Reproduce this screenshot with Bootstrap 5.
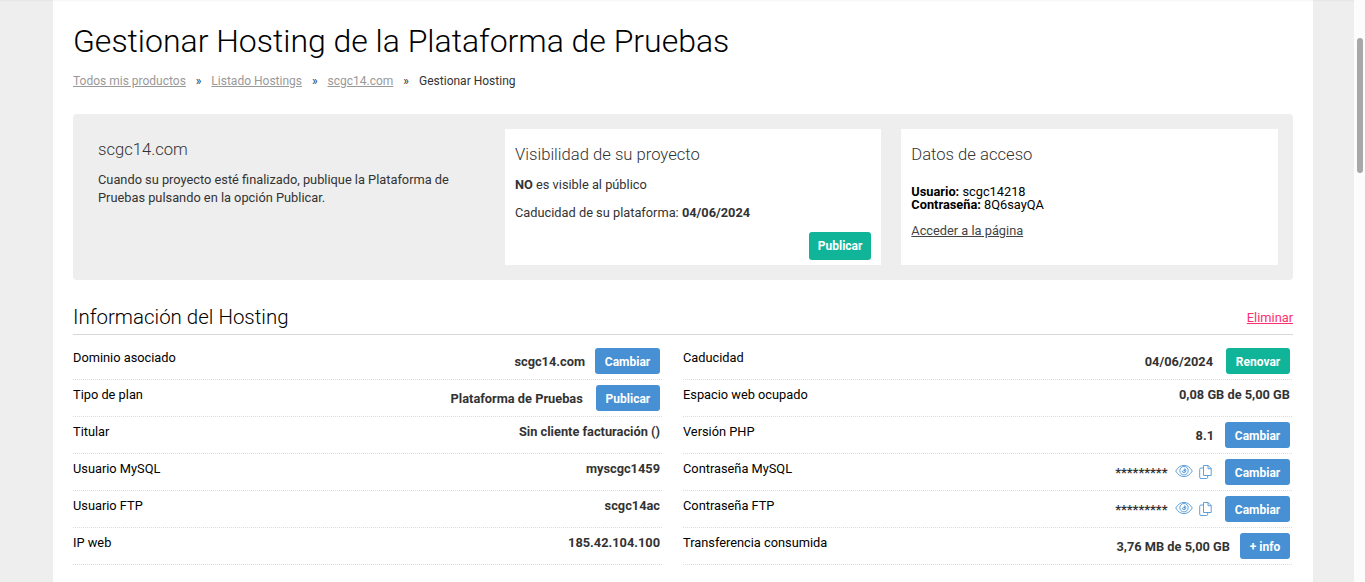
<!DOCTYPE html>
<html lang="es">
<head>
<meta charset="utf-8">
<meta name="viewport" content="width=device-width, initial-scale=1">
<title>Gestionar Hosting</title>
<link rel="stylesheet" href="https://cdn.jsdelivr.net/npm/bootstrap@5.3.0/dist/css/bootstrap.min.css">
<style>
  body { font-family: Roboto, "Liberation Sans", sans-serif; font-size: 12.8px; line-height: 18px; color: #333; background: #fcfcfc; }
  .viewport { width: 1365px; height: 582px; }
  .page-bg { width: 1354px; background: #eee; padding: 0 41px 0 53px; box-shadow: inset 0 3px 3px -3px rgba(0,0,0,.08); }
  .sheet { background: #fff; padding: 0 20px; box-shadow: inset 0 3px 3px -3px rgba(0,0,0,.08); }
  .scroll-track { width: 11px; background: #fcfcfc; padding: 38px 2px 0 3px; }
  .scroll-thumb { height: 135px; background: #a8a8a8; border-radius: 3px; }
  .page-title { font-size: 32px; line-height: 40px; font-weight: 300; color: #000; padding-top: 21px; letter-spacing: -.02px; }
  .crumbs { font-size: 12px; line-height: 18px; margin-top: 11px; }
  .crumbs a { color: #999; }
  .crumbs .sep { width: 25.5px; text-align: center; color: #1a3c66; }
  .crumbs .sep-last { width: 25.8px; color: #333; }
  .summary { margin-top: 24px; height: 166px; padding: 15px; background: #eee; border-radius: 4px; }
  .summary h2 { font-size: 16.64px; line-height: 20px; font-weight: 300; color: #333; margin: 0; padding-top: 1px; }
  .summary h2 + p { margin-top: 11px; }
  .intro { width: 417px; padding: 10px 30px 0 10px; }
  .panel { width: 376px; background: #fff; padding: 15px 10px 5px; }
  .panel-access { width: 377px; margin-left: 20px; padding-left: 10.3px; }
  .expiry { margin-top: 10px; }
  .summary h2 + .access { color: #000; line-height: 13px; margin-top: 20px; }
  .access-link { color: #444; margin-top: 11px; }
  .section-head { height: 55px; border-bottom: 1px solid #d6d8d9; }
  .section-head h2 { font-size: 20.48px; line-height: 24px; font-weight: 300; color: #000; margin: 25px 0 0; }
  .section-head a { color: #fa2f6e; margin-top: 29px; }
  .list-left { width: 589px; }
  .list-right { width: 609px; margin-left: 21px; }
  .item { height: 37px; border-bottom: 1px dotted #dadcdd; padding: 5px 2px 0 0; }
  .item dt { font-weight: 400; color: #000; padding-top: 1px; }
  .item dd { margin: 0; font-weight: 700; padding-top: 1px; }
  .item .tall { line-height: 28px; padding-top: 0; }
  .btn-act { --bs-btn-font-size: 12px; --bs-btn-font-weight: 700; --bs-btn-line-height: 26px; --bs-btn-padding-x: 9.8px; --bs-btn-padding-y: 0; --bs-btn-border-width: 0; --bs-btn-border-radius: 3px; --bs-btn-color: #fff; --bs-btn-bg: #4690d3; }
  .item .btn-act { height: 26px; line-height: 28px; }
  .btn-go { --bs-btn-bg: #10b499; }
  .btn-publish { --bs-btn-line-height: 28px; --bs-btn-padding-x: 8.6px; }
  .g10 { margin-left: 10px; } .g11 { margin-left: 11px; } .g13 { margin-left: 13px; }
  .ico { stroke: #4690d3; fill: none; stroke-width: .85; display: block; margin: 5px 0 0 7.500px; }
  .ico-copy { margin: 6px 0 0 6px; }
</style>
</head>
<body class="overflow-hidden">
<svg class="d-none">
  <symbol id="eye" viewBox="0 0 18 14"><path d="M.7 7C3 3.200 5.700 1.400 9 1.400S15 3.200 17.300 7C15 10.800 12.300 12.600 9 12.600S3 10.800.7 7Z"/><circle cx="9" cy="6.700" r="4.200"/><path d="M9 4.800a1.900 1.900 0 1 1-1.900 1.900" /><circle cx="9.300" cy="6.600" r="1" fill="#4690d3" stroke="none"/></symbol>
  <symbol id="copy" viewBox="0 0 13 14"><path d="M4.500.5h4.700l3 3v7h-7.700ZM9 .5v3.200h3.200M4.500 3H2Q.7 3 .7 4.300v7.900q0 1.300 1.300 1.300h5.500q1.200 0 1.200-1.300v-1.700"/></symbol>
</svg>
<div class="viewport d-flex">
  <div class="page-bg">
    <main class="sheet h-100">
      <h1 class="page-title mb-0">Gestionar Hosting de la Plataforma de Pruebas</h1>
      <nav class="crumbs d-flex">
        <a href="#">Todos mis productos</a><span class="sep">»</span><a href="#">Listado Hostings</a><span class="sep">»</span><a href="#">scgc14.com</a><span class="sep sep-last">»</span><span>Gestionar Hosting</span>
      </nav>
      <section class="summary d-flex">
        <div class="intro">
          <h2>scgc14.com</h2>
          <p class="mb-0">Cuando su proyecto esté finalizado, publique la Plataforma de Pruebas pulsando en la opción Publicar.</p>
        </div>
        <div class="panel d-flex flex-column">
          <h2>Visibilidad de su proyecto</h2>
          <p class="mb-0"><b>NO</b> es visible al público</p>
          <p class="mb-0 expiry">Caducidad de su plataforma: <b>04/06/2024</b></p>
          <button class="btn btn-act btn-go btn-publish mt-auto align-self-end">Publicar</button>
        </div>
        <div class="panel panel-access">
          <h2>Datos de acceso</h2>
          <p class="access mb-0"><b>Usuario:</b> scgc14218<br><b>Contraseña:</b> 8Q6sayQA</p>
          <p class="access-link mb-0"><a class="text-reset" href="#">Acceder a la página</a></p>
        </div>
      </section>
      <div class="section-head d-flex justify-content-between align-items-start">
        <h2>Información del Hosting</h2>
        <a href="#">Eliminar</a>
      </div>
      <div class="d-flex pt-2">
        <dl class="list-left mb-0">
          <div class="item d-flex justify-content-between"><dt>Dominio asociado</dt><dd class="tall d-flex">scgc14.com<button class="btn btn-act g10">Cambiar</button></dd></div>
          <div class="item d-flex justify-content-between"><dt>Tipo de plan</dt><dd class="tall d-flex">Plataforma de Pruebas<button class="btn btn-act g13">Publicar</button></dd></div>
          <div class="item d-flex justify-content-between"><dt>Titular</dt><dd>Sin cliente facturación ()</dd></div>
          <div class="item d-flex justify-content-between"><dt>Usuario MySQL</dt><dd>myscgc1459</dd></div>
          <div class="item d-flex justify-content-between"><dt>Usuario FTP</dt><dd>scgc14ac</dd></div>
          <div class="item d-flex justify-content-between"><dt>IP web</dt><dd>185.42.104.100</dd></div>
        </dl>
        <dl class="list-right mb-0">
          <div class="item d-flex justify-content-between"><dt>Caducidad</dt><dd class="tall d-flex">04/06/2024<button class="btn btn-act btn-go g13">Renovar</button></dd></div>
          <div class="item d-flex justify-content-between"><dt>Espacio web ocupado</dt><dd>0,08 GB de 5,00 GB</dd></div>
          <div class="item d-flex justify-content-between"><dt>Versión PHP</dt><dd class="tall d-flex">8.1<button class="btn btn-act g11">Cambiar</button></dd></div>
          <div class="item d-flex justify-content-between"><dt>Contraseña MySQL</dt><dd class="tall d-flex">*********<svg class="ico" width="18" height="14"><use href="#eye"/></svg><svg class="ico ico-copy" width="13" height="14"><use href="#copy"/></svg><button class="btn btn-act g13">Cambiar</button></dd></div>
          <div class="item d-flex justify-content-between"><dt>Contraseña FTP</dt><dd class="tall d-flex">*********<svg class="ico" width="18" height="14"><use href="#eye"/></svg><svg class="ico ico-copy" width="13" height="14"><use href="#copy"/></svg><button class="btn btn-act g13">Cambiar</button></dd></div>
          <div class="item d-flex justify-content-between"><dt>Transferencia consumida</dt><dd class="tall d-flex">3,76 MB de 5,00 GB<button class="btn btn-act g10">+ info</button></dd></div>
        </dl>
      </div>
    </main>
  </div>
  <div class="scroll-track"><div class="scroll-thumb"></div></div>
</div>
<script src="https://cdn.jsdelivr.net/npm/bootstrap@5.3.0/dist/js/bootstrap.bundle.min.js"></script>
</body>
</html>
